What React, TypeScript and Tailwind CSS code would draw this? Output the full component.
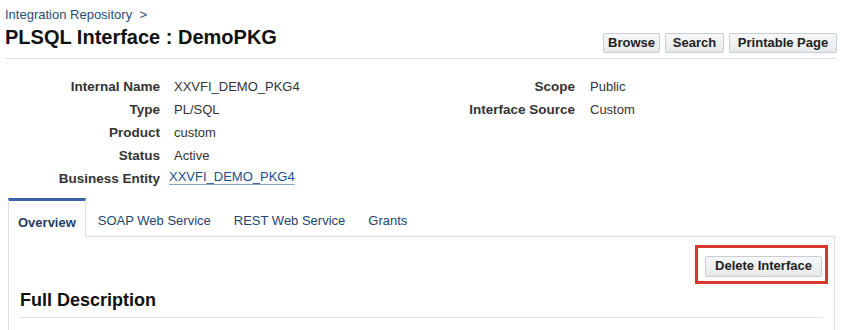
import React from 'react';

const font = { fontFamily: '"Liberation Sans", Arial, sans-serif' };

const ToolButton: React.FC<{ label: string; className?: string }> = ({ label, className }) => (
  <button
    className={
      'h-[20px] rounded-[2px] border border-[#c9cdd2] bg-gradient-to-b from-[#f7f8f9] to-[#e6e8ea] px-0 text-center text-[13px] font-bold leading-[18px] text-[#222] ' +
      (className || '')
    }
  >
    {label}
  </button>
);

const Field: React.FC<{ label: string; children: React.ReactNode }> = ({ label, children }) => (
  <>
    <div className="text-right text-[13.5px] font-bold leading-[23px] text-[#333]">{label}</div>
    <div className="text-[13px] leading-[23px] text-[#333]">{children}</div>
  </>
);

const tabs = ['Overview', 'SOAP Web Service', 'REST Web Service', 'Grants'];

export default function App() {
  return (
    <div className="h-[330px] w-[842px] overflow-hidden bg-white" style={font}>
      <div className="px-[5px] pt-[6px]">
        <div className="text-[13px] leading-[18px] text-[#2d4c72]">Integration Repository &nbsp;&gt;</div>
        <div className="flex items-end justify-between border-b border-[#dde1e5] pb-[8px]">
          <h1 className="text-[20px] font-bold leading-[26px] text-[#111]">PLSQL Interface : DemoPKG</h1>
          <div className="mb-[-3px] flex gap-[5px]">
            <ToolButton label="Browse" className="w-[57px]" />
            <ToolButton label="Search" className="w-[59px]" />
            <ToolButton label="Printable Page" className="w-[108px]" />
          </div>
        </div>
      </div>

      <div className="flex pt-[16px]">
        <div className="grid w-[420px] grid-cols-[160px_1fr] gap-x-[14px]">
          <Field label="Internal Name">XXVFI_DEMO_PKG4</Field>
          <Field label="Type">PL/SQL</Field>
          <Field label="Product">custom</Field>
          <Field label="Status">Active</Field>
          <Field label="Business Entity">
            <span className="relative left-[-5px] top-[-2px] text-[#1c4f8c] underline decoration-[#8aa3c2] underline-offset-[3px]">
              XXVFI_DEMO_PKG4
            </span>
          </Field>
        </div>
        <div className="grid h-fit grid-cols-[155px_1fr] gap-x-[15px]">
          <Field label="Scope">Public</Field>
          <Field label="Interface Source">Custom</Field>
        </div>
      </div>

      <div className="ml-[8px] mt-[8px] w-[827px]">
        <div className="flex border-b border-[#d9dde2]">
          {tabs.map((t, i) =>
            i === 0 ? (
              <div
                key={t}
                className="mb-[-1px] h-[39px] border-x border-t-[3px] border-x-[#d9dde2] border-t-[#3565a8] bg-white px-[9px] text-[13px] font-bold leading-[44px] text-[#1f3f66]"
              >
                {t}
              </div>
            ) : (
              <div key={t} className="h-[38px] pl-[12px] pr-[11px] text-[13px] leading-[46px] text-[#23466f]">
                {t}
              </div>
            )
          )}
        </div>
        <div className="h-[100px] border-x border-[#d9dde2] pl-[11px] pr-[11px]">
          <div className="mr-[-5px] flex justify-end pt-[8px]">
            <div className="border-[3px] border-[#d9362e] pb-[4px] pl-[7px] pr-[3px] pt-[5px]">
              <ToolButton label="Delete Interface" className="h-[21px] w-[117px]" />
            </div>
          </div>
          <h2 className="mt-[5px] border-b border-[#dde1e5] pb-[6px] text-[18px] font-bold leading-[22px] text-[#111]">
            Full Description
          </h2>
        </div>
      </div>
    </div>
  );
}
